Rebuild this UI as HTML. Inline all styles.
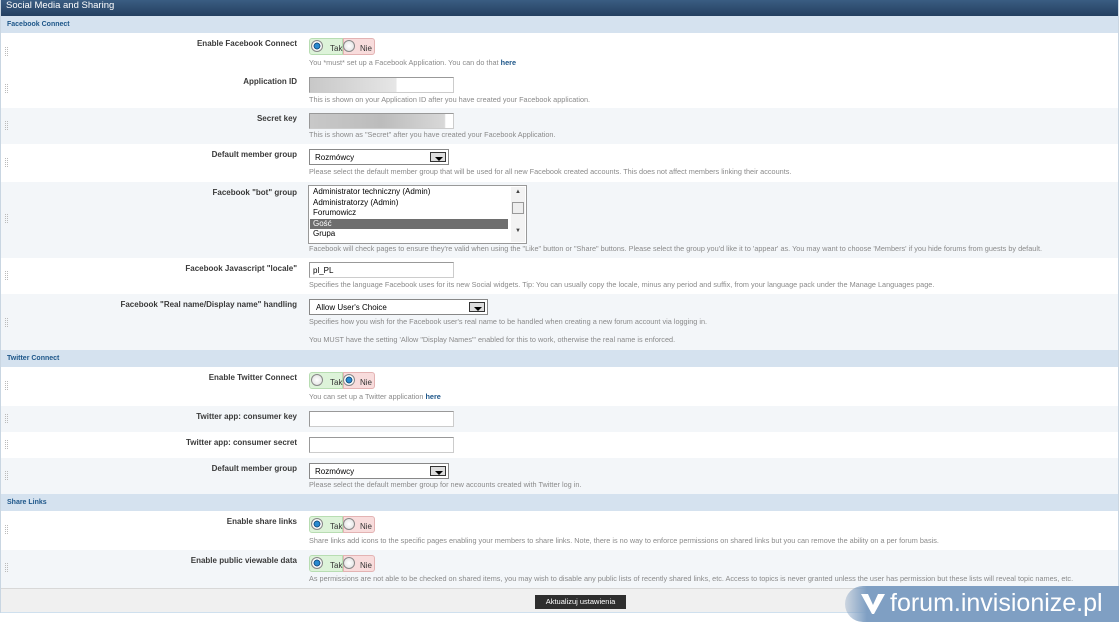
<!DOCTYPE html>
<html><head><meta charset="utf-8"><style>
*{margin:0;padding:0;box-sizing:border-box}
body{width:1119px;height:622px;background:#fff;font-family:"Liberation Sans",Arial,sans-serif;position:relative;overflow:hidden}
.abs{position:absolute}
.hdr{left:0;top:0;width:1119px;height:16px;background:linear-gradient(#3a5d82,#243f60);color:#fff;font-size:9.5px;padding:0 0 0 6px;line-height:11px}
.sec{left:1px;width:1117px;height:17px;background:#d5e2ef;color:#1d5689;font-size:7px;font-weight:bold;padding-left:6px;line-height:17px}
.row{left:1px;width:1117px}
.g{background:#f3f6f9}
.w{background:#fff}
.lab{position:absolute;right:821px;top:6px;font-size:8px;font-weight:bold;color:#3a3a3a;white-space:nowrap}
.desc{position:absolute;left:308px;font-size:7.3px;color:#8a8a8a;white-space:nowrap}
.desc a{color:#1d5689;font-weight:bold}
.grip{position:absolute;left:4px;width:3px;height:9px;border-left:1px dotted #bbb;border-right:1px dotted #bbb}
.yn{position:absolute;left:308px;top:5px;width:66px;height:17px}
.yn .y{position:absolute;left:0;top:0;width:34px;height:17px;background:#ddf3d9;border:1px solid #b8ddb2;border-radius:3px 0 0 3px}
.yn .n{position:absolute;left:34px;top:0;width:32px;height:17px;background:#f8dcdc;border:1px solid #e3b3b3;border-radius:0 3px 3px 0}
.rad{position:absolute;top:2px;width:12px;height:12px;border-radius:50%;border:1px solid #888;background:radial-gradient(#fff,#ddd)}
.rad.on{background:radial-gradient(#2a8ad0 30%,#0b3b66 45%,#fff 50%,#ddd)}
.yn span{position:absolute;top:6px;font-size:8px;color:#333}
.inp{position:absolute;left:308px;width:145px;height:16px;border:1px solid #999;border-right-color:#ccc;border-bottom-color:#ccc;background:#fff;font-size:8px;padding:3px 3px}
.sel{position:absolute;left:308px;height:16px;border:1px solid #888;background:#fff;font-size:8px;padding:3px 5px}
.sel i{position:absolute;right:2px;top:2px;width:16px;height:10px;border:1px solid #333;background:#ddd}
.sel i:after{content:"";position:absolute;left:4px;top:4px;border:4px solid transparent;border-top:4px solid #000}
</style></head><body>
<div class="abs hdr">Social Media and Sharing</div>
<div class="abs sec" style="top:16px">Facebook Connect</div>

<div class="abs row w" style="top:33px;height:38px"><div class="grip" style="top:14px"></div><div class="lab">Enable Facebook Connect</div>
<div class="yn"><div class="y"></div><div class="n"></div><div class="rad on" style="left:2px"></div><span style="left:21px">Tak</span><div class="rad" style="left:34px"></div><span style="left:51px">Nie</span></div>
<div class="desc" style="top:25px">You *must* set up a Facebook Application. You can do that <a>here</a></div></div>

<div class="abs row w" style="top:71px;height:37px"><div class="grip" style="top:13px"></div><div class="lab">Application ID</div>
<div class="inp" style="top:6px;background:linear-gradient(90deg,#c8c8c8,#e6e6e6 60%,#fff 61%)"></div>
<div class="desc" style="top:24px">This is shown on your Application ID after you have created your Facebook application.</div></div>

<div class="abs row g" style="top:108px;height:36px"><div class="grip" style="top:13px"></div><div class="lab">Secret key</div>
<div class="inp" style="top:5px;background:linear-gradient(90deg,#c8c8c8,#bcbcbc 50%,#d8d8d8 94%,#fff 95%)"></div>
<div class="desc" style="top:22px">This is shown as "Secret" after you have created your Facebook Application.</div></div>

<div class="abs row w" style="top:144px;height:38px"><div class="grip" style="top:14px"></div><div class="lab">Default member group</div>
<div class="sel" style="top:5px;width:140px">Rozmówcy<i></i></div>
<div class="desc" style="top:23px">Please select the default member group that will be used for all new Facebook created accounts. This does not affect members linking their accounts.</div></div>

<div class="abs row g" style="top:182px;height:76px"><div class="grip" style="top:32px"></div><div class="lab">Facebook "bot" group</div>
<div class="abs" style="left:307px;top:3px;width:219px;height:59px;border:1px solid #999;background:#fff;font-size:8px;color:#000;line-height:10.6px;padding:1px">
<div style="padding-left:3px">Administrator techniczny (Admin)</div><div style="padding-left:3px">Administratorzy (Admin)</div><div style="padding-left:3px">Forumowicz</div><div style="padding-left:3px;background:#6e6e6e;color:#fff;width:198px">Gość</div><div style="padding-left:3px">Grupa</div>
<div class="abs" style="right:1px;top:1px;width:14px;height:55px;background:#f3f3f3;font-size:6px;text-align:center;color:#444">▲<div style="margin:4px 1px;height:12px;border:1px solid #999;background:#eee"></div><div style="margin-top:12px">▼</div></div></div>
<div class="desc" style="top:62px">Facebook will check pages to ensure they're valid when using the "Like" button or "Share" buttons. Please select the group you'd like it to 'appear' as. You may want to choose 'Members' if you hide forums from guests by default.</div></div>

<div class="abs row w" style="top:258px;height:36px"><div class="grip" style="top:13px"></div><div class="lab">Facebook Javascript "locale"</div>
<div class="inp" style="top:4px;width:145px">pl_PL</div>
<div class="desc" style="top:22px">Specifies the language Facebook uses for its new Social widgets. Tip: You can usually copy the locale, minus any period and suffix, from your language pack under the Manage Languages page.</div></div>

<div class="abs row g" style="top:294px;height:56px"><div class="grip" style="top:24px"></div><div class="lab">Facebook "Real name/Display name" handling</div>
<div class="sel" style="top:5px;width:179px;padding-left:6px">Allow User's Choice<i></i></div>
<div class="desc" style="top:23px">Specifies how you wish for the Facebook user's real name to be handled when creating a new forum account via logging in.</div>
<div class="desc" style="top:41px">You MUST have the setting 'Allow "Display Names"' enabled for this to work, otherwise the real name is enforced.</div></div>

<div class="abs sec" style="top:350px">Twitter Connect</div>

<div class="abs row w" style="top:367px;height:39px"><div class="grip" style="top:14px"></div><div class="lab">Enable Twitter Connect</div>
<div class="yn"><div class="y"></div><div class="n"></div><div class="rad" style="left:2px"></div><span style="left:21px">Tak</span><div class="rad on" style="left:34px"></div><span style="left:51px">Nie</span></div>
<div class="desc" style="top:25px">You can set up a Twitter application <a>here</a></div></div>

<div class="abs row g" style="top:406px;height:26px"><div class="grip" style="top:8px"></div><div class="lab">Twitter app: consumer key</div>
<div class="inp" style="top:5px"></div></div>

<div class="abs row w" style="top:432px;height:26px"><div class="grip" style="top:8px"></div><div class="lab">Twitter app: consumer secret</div>
<div class="inp" style="top:5px"></div></div>

<div class="abs row g" style="top:458px;height:36px"><div class="grip" style="top:13px"></div><div class="lab">Default member group</div>
<div class="sel" style="top:5px;width:140px">Rozmówcy<i></i></div>
<div class="desc" style="top:22px">Please select the default member group for new accounts created with Twitter log in.</div></div>

<div class="abs sec" style="top:494px">Share Links</div>

<div class="abs row w" style="top:511px;height:39px"><div class="grip" style="top:14px"></div><div class="lab">Enable share links</div>
<div class="yn"><div class="y"></div><div class="n"></div><div class="rad on" style="left:2px"></div><span style="left:21px">Tak</span><div class="rad" style="left:34px"></div><span style="left:51px">Nie</span></div>
<div class="desc" style="top:25px">Share links add icons to the specific pages enabling your members to share links. Note, there is no way to enforce permissions on shared links but you can remove the ability on a per forum basis.</div></div>

<div class="abs row g" style="top:550px;height:38px"><div class="grip" style="top:13px"></div><div class="lab">Enable public viewable data</div>
<div class="yn"><div class="y"></div><div class="n"></div><div class="rad on" style="left:2px"></div><span style="left:21px">Tak</span><div class="rad" style="left:34px"></div><span style="left:51px">Nie</span></div>
<div class="desc" style="top:24px">As permissions are not able to be checked on shared items, you may wish to disable any public lists of recently shared links, etc. Access to topics is never granted unless the user has permission but these lists will reveal topic names, etc.</div></div>

<div class="abs" style="left:1px;top:588px;width:1117px;height:25px;background:#f0f0f0;border-top:1px solid #d8d8d8;border-bottom:1px solid #cfe0ee"></div>
<div class="abs" style="left:535px;top:595px;width:91px;height:14px;background:#2e2e2e;color:#fff;font-size:7.5px;text-align:center;line-height:14px">Aktualizuj ustawienia</div>
<div class="abs" style="left:0;top:0;width:1px;height:613px;background:#c9d6e2"></div>
<div class="abs" style="left:1118px;top:0;width:1px;height:613px;background:#c9d6e2"></div>

<div class="abs" style="left:845px;top:586px;width:274px;height:36px;background:linear-gradient(90deg,rgba(120,150,185,0.3),#7f9fc3 8%,#7f9fc3);border-radius:18px 0 0 18px"></div>
<svg class="abs" style="left:860px;top:592px" width="26" height="24" viewBox="0 0 26 24"><path d="M1 2 L8 2 L13 13 L18 2 L25 2 L14 22 L12 22 Z" fill="#fff"/></svg>
<div class="abs" style="left:890px;top:586px;font-size:25px;color:#fff;line-height:34px;white-space:nowrap">forum.invisionize.pl</div>
</body></html>
